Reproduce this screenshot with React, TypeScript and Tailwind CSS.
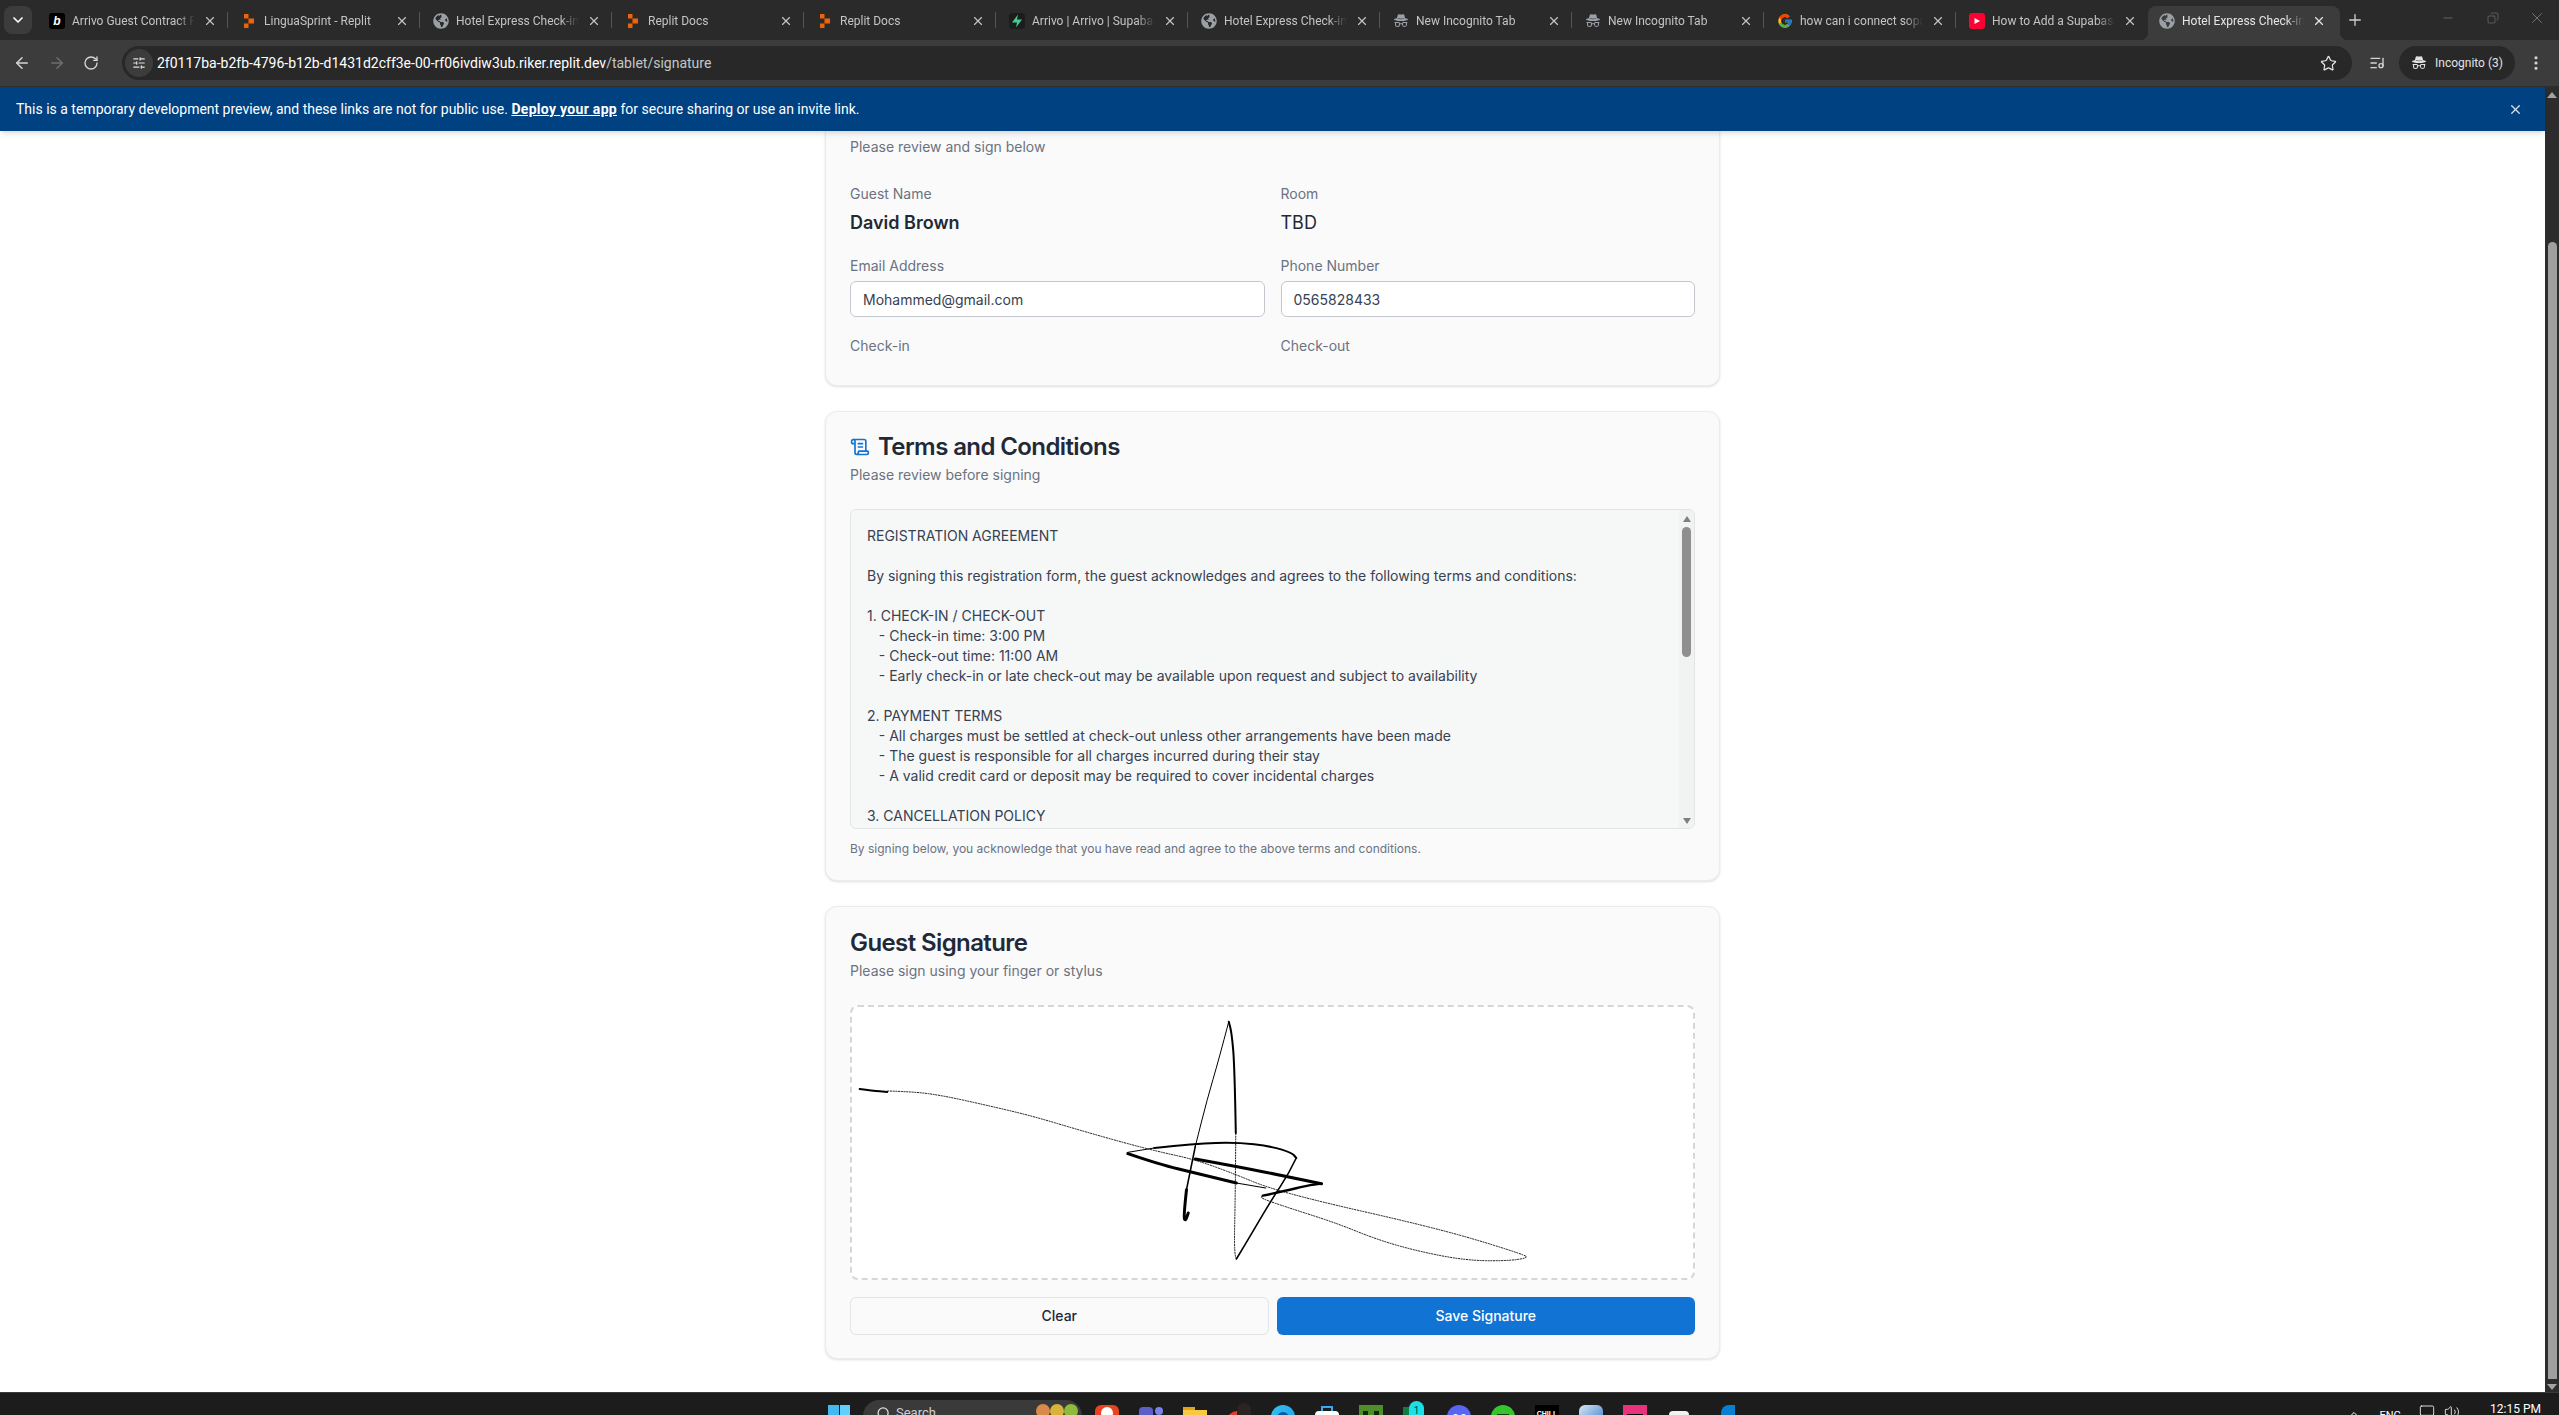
import { ReactNode } from "react";
import {
  ArrowLeft,
  ArrowRight,
  ChevronDown,
  ChevronUp,
  Copy,
  ListMusic,
  Minus,
  Monitor,
  MoreVertical,
  Plus,
  RotateCw,
  ScrollText,
  Search,
  SlidersHorizontal,
  Star,
  Volume2,
  X,
} from "lucide-react";
import { BsIncognito } from "react-icons/bs";
import { FaGlobeAmericas } from "react-icons/fa";
import { FcGoogle } from "react-icons/fc";

const ReplitIcon = () => (
  <svg viewBox="0 0 16 16" className="w-4 h-4">
    <path d="M3 1h4.500v4.500H3zM7.500 5.500H13v5H7.500zM3 10.500h4.500V15H3z" fill="#f26207" />
  </svg>
);

const BoltIcon = () => (
  <div className="w-4 h-4 rounded-sm bg-[#1c1c1c] flex items-center justify-center">
    <svg viewBox="0 0 16 16" className="w-4 h-4">
      <path d="M9 1.500 3 9.500h5l-1 5 6-8H8z" fill="#3ecf8e" />
    </svg>
  </div>
);

const BrandB = () => (
  <div className="w-4 h-4 rounded-[3px] bg-black text-white flex items-center justify-center text-[12px] font-bold italic font-['Liberation_Sans',sans-serif]">
    b
  </div>
);

const YoutubeIcon = () => (
  <div className="w-4 h-4 rounded-[3px] bg-[#ff0033] flex items-center justify-center">
    <svg viewBox="0 0 8 8" className="w-2 h-2">
      <path d="M1.500 1v6L7 4z" fill="#fff" />
    </svg>
  </div>
);

const Globe = () => <FaGlobeAmericas className="w-4 h-4 text-[#9aa0a6]" />;
const Spy = () => <BsIncognito className="w-4 h-4 text-[#9aa0a6]" />;

const tabs: { title: string; icon: ReactNode }[] = [
  { title: "Arrivo Guest Contract Form", icon: <BrandB /> },
  { title: "LinguaSprint - Replit", icon: <ReplitIcon /> },
  { title: "Hotel Express Check-in", icon: <Globe /> },
  { title: "Replit Docs", icon: <ReplitIcon /> },
  { title: "Replit Docs", icon: <ReplitIcon /> },
  { title: "Arrivo | Arrivo | Supabase", icon: <BoltIcon /> },
  { title: "Hotel Express Check-in", icon: <Globe /> },
  { title: "New Incognito Tab", icon: <Spy /> },
  { title: "New Incognito Tab", icon: <Spy /> },
  { title: "how can i connect sopabase", icon: <FcGoogle className="w-4 h-4" /> },
  { title: "How to Add a Supabase", icon: <YoutubeIcon /> },
  { title: "Hotel Express Check-in", icon: <Globe /> },
];

function TabStrip() {
  return (
    <div className="h-10 bg-[#2a2a2a] flex items-end shrink-0 font-['Roboto',sans-serif]">
      <div className="w-9 h-10 flex items-center justify-center shrink-0">
        <div className="w-[28px] h-[28px] rounded-lg bg-[#3c3c3c] flex items-center justify-center">
          <ChevronDown className="w-4 h-4 text-white" strokeWidth={2.5} />
        </div>
      </div>
      {tabs.map((tab, i) => {
        const active = i === tabs.length - 1;
        return (
          <div
            key={i}
            className={
              active
                ? "relative w-[192px] h-[34px] pb-1 pl-[11px] pr-[14px] flex items-center bg-[#3c3c3c] rounded-t-lg text-[#e6e6e6]"
                : "relative w-[192px] h-[34px] pb-1 pl-[13px] pr-[11px] flex items-center text-[#c4c4c4]"
            }
          >
            <div className="w-4 h-4 shrink-0">{tab.icon}</div>
            <span className="ml-[7px] flex-1 min-w-0 text-[12px] whitespace-nowrap overflow-hidden [mask-image:linear-gradient(to_right,black_85%,transparent)]">
              {tab.title}
            </span>
            <X className="w-[14px] h-[14px] ml-2 shrink-0" strokeWidth={2} />
            {!active && i < 10 && <div className="absolute right-0 top-[6px] h-4 w-px bg-[#555555]" />}
            {active && (
              <>
                <div className="absolute bottom-0 -left-2 w-2 h-2 bg-[radial-gradient(circle_at_0_0,transparent_8px,#3c3c3c_8.5px)]" />
                <div className="absolute bottom-0 -right-2 w-2 h-2 bg-[radial-gradient(circle_at_100%_0,transparent_8px,#3c3c3c_8.5px)]" />
              </>
            )}
          </div>
        );
      })}
      <div className="h-10 flex items-center ml-[6px]">
        <Plus className="w-[18px] h-[18px] text-[#d0d0d0]" strokeWidth={1.75} />
      </div>
      <div className="h-10 ml-auto flex items-center pb-1 text-[#8b8b8b]">
        <div className="w-[45px] flex justify-center">
          <Minus className="w-[14px] h-[14px]" strokeWidth={1} />
        </div>
        <div className="w-[45px] flex justify-center">
          <Copy className="w-3 h-3 -scale-x-100" strokeWidth={1} />
        </div>
        <div className="w-[44px] flex justify-center">
          <X className="w-[18px] h-[18px]" strokeWidth={1} />
        </div>
      </div>
    </div>
  );
}

function Toolbar() {
  return (
    <div className="h-[47px] bg-[#3c3c3c] border-b border-[#2e2e2e] flex items-center shrink-0 font-['Roboto',sans-serif]">
      <div className="w-[122px] shrink-0 flex items-center pl-[13px] gap-[17px]">
        <ArrowLeft className="w-[18px] h-[18px] text-[#d5d5d5]" strokeWidth={2} />
        <ArrowRight className="w-[18px] h-[18px] text-[#6e6e6e]" strokeWidth={2} />
        <RotateCw className="w-[16px] h-[16px] text-[#d5d5d5]" strokeWidth={2} />
      </div>
      <div className="w-[2230px] h-[34px] rounded-full bg-[#282828] flex items-center pl-[3px] pr-[15px]">
        <div className="w-[28px] h-[28px] rounded-full bg-[#3c3c3c] flex items-center justify-center">
          <SlidersHorizontal className="w-[14px] h-[14px] text-[#e0e0e0]" strokeWidth={2} />
        </div>
        <div className="ml-[4px] text-[14px] whitespace-nowrap text-white">
          2f0117ba-b2fb-4796-b12b-d1431d2cff3e-00-rf06ivdiw3ub.riker.replit.dev
          <span className="text-[#c4c7c5]">/tablet/signature</span>
        </div>
        <Star className="ml-auto w-[17px] h-[17px] text-[#e3e3e3]" strokeWidth={1.75} />
      </div>
      <ListMusic className="ml-[17px] w-4 h-4 text-[#d5d5d5]" strokeWidth={2} />
      <div className="ml-[14px] w-[116px] h-[34px] rounded-full bg-[#282828] flex items-center pl-3 text-[12px] text-[#e3e3e3] whitespace-nowrap">
        <BsIncognito className="w-4 h-4 mr-[8px] text-[#e3e3e3]" />
        Incognito (3)
      </div>
      <MoreVertical className="ml-[12px] w-[18px] h-[18px] text-[#d5d5d5]" strokeWidth={2.25} />
    </div>
  );
}

function Banner() {
  return (
    <div className="h-11 bg-[#004182] text-white flex items-center pl-4 pr-[22px] shrink-0 shadow-md relative font-['Roboto',sans-serif] text-[14px]">
      <span>
        This is a temporary development preview, and these links are not for public use.{" "}
        <span className="font-bold underline tracking-[0.3px]">Deploy your app</span> for secure sharing or use an invite link.
      </span>
      <X className="ml-auto w-[15px] h-[15px] text-[#d6e2f0]" strokeWidth={2} />
    </div>
  );
}

function Field({ label, children }: { label: string; children?: ReactNode }) {
  return (
    <div className="flex flex-col gap-[5px]">
      <div className="text-sm leading-5 text-[#6b7280]">{label}</div>
      {children}
    </div>
  );
}

function FieldInput({ value }: { value: string }) {
  return (
    <div className="h-9 rounded-md border border-[#c4c7ce] bg-white flex items-center px-3 pt-px text-sm text-[#374151]">
      {value}
    </div>
  );
}

const terms = [
  "REGISTRATION AGREEMENT",
  "",
  "By signing this registration form, the guest acknowledges and agrees to the following terms and conditions:",
  "",
  "1. CHECK-IN / CHECK-OUT",
  "   - Check-in time: 3:00 PM",
  "   - Check-out time: 11:00 AM",
  "   - Early check-in or late check-out may be available upon request and subject to availability",
  "",
  "2. PAYMENT TERMS",
  "   - All charges must be settled at check-out unless other arrangements have been made",
  "   - The guest is responsible for all charges incurred during their stay",
  "   - A valid credit card or deposit may be required to cover incidental charges",
  "",
  "3. CANCELLATION POLICY",
  "   - Cancellations must be made at least 24 hours before arrival",
];

function TermsBox() {
  return (
    <div className="mt-6 h-[320px] rounded-md border border-[#e2e4e7] bg-[#f6f7f7] flex overflow-hidden">
      <div className="flex-1 min-w-0 pt-4 pl-4 text-sm leading-5 text-[#374151] whitespace-pre overflow-hidden">
        {terms.map((line, i) => (
          <div key={i} className="h-5">
            {line}
          </div>
        ))}
      </div>
      <div className="w-[15px] bg-[#f1f2f2] flex flex-col items-center shrink-0 pt-[6px] pb-[4px]">
        <div className="w-0 h-0 border-x-[4px] border-x-transparent border-b-[6px] border-b-[#7f7f7f]" />
        <div className="mt-[5px] w-[9px] h-[130px] rounded-full bg-[#8f8f8f]" />
        <div className="mt-auto w-0 h-0 border-x-[4px] border-x-transparent border-t-[6px] border-t-[#7f7f7f]" />
      </div>
    </div>
  );
}

// traced from the reference crop, x and y are scaled below to fit the pad
const strokes: { w: number; dash?: string; pts: number[][] }[] = [
  { w: 2, pts: [[68, 568], [90, 573], [115, 577]] },
  {
    w: 0.9,
    dash: "2 0.7",
    pts: [
      [115, 574], [160, 576], [210, 588], [280, 615], [360, 648], [440, 690], [520, 730], [580, 757], [640, 780],
      [710, 825], [760, 862], [850, 905], [1000, 965], [1100, 1010], [1200, 1065], [1207, 1075], [1170, 1084],
      [1100, 1082], [1020, 1055], [950, 1020], [880, 970], [800, 925], [750, 895], [755, 888],
    ],
  },
  { w: 2.4, pts: [[755, 888], [790, 875], [830, 858], [855, 852]] },
  { w: 3, pts: [[855, 852], [800, 832], [710, 800], [640, 778]] },
  { w: 1, pts: [[525, 758], [570, 745]] },
  { w: 2, pts: [[570, 745], [640, 732], [710, 728], [770, 740], [805, 760], [812, 775]] },
  { w: 1.6, pts: [[812, 775], [800, 820], [770, 900], [740, 990], [710, 1078]] },
  { w: 0.9, dash: "2 0.7", pts: [[710, 1078], [706, 1070], [708, 900], [709, 700]] },
  { w: 2, pts: [[709, 700], [707, 500], [702, 400], [697, 366]] },
  { w: 1, pts: [[697, 366], [680, 480], [660, 600], [640, 740]] },
  { w: 1.6, pts: [[640, 740], [625, 870]] },
  { w: 3, pts: [[625, 870], [620, 950], [623, 965], [628, 940]] },
  { w: 3, pts: [[525, 762], [580, 795], [640, 820], [710, 850]] },
  { w: 1.2, pts: [[710, 850], [760, 865]] },
];

// quadratic curves through the midpoints, so the stroke stays round
function smooth(pts: number[][]) {
  const p = pts.map(([x, y]) => [(x - 55) / 1.704, (y - 322) / 3]);
  let d = `M${p[0][0]} ${p[0][1]}`;
  for (let i = 1; i < p.length - 1; i++) {
    d += ` Q${p[i][0]} ${p[i][1]} ${(p[i][0] + p[i + 1][0]) / 2} ${(p[i][1] + p[i + 1][1]) / 2}`;
  }
  const last = p[p.length - 1];
  return d + ` L${last[0]} ${last[1]}`;
}

function SignaturePad() {
  return (
    <div className="mt-6 h-[275px] rounded-lg border-2 border-dashed border-[#d4d6da] bg-white overflow-hidden">
      <svg viewBox="0 0 841 271" className="w-full h-full" fill="none" stroke="#000" strokeLinecap="round" strokeLinejoin="round">
        {strokes.map((s, i) => (
          <path key={i} strokeWidth={s.w} strokeDasharray={s.dash} strokeLinecap={s.dash ? "butt" : "round"} d={smooth(s.pts)} />
        ))}
      </svg>
    </div>
  );
}

function Card({ children, className }: { children: ReactNode; className?: string }) {
  return <section className={`rounded-xl border border-[#ececee] bg-[#fafafa] px-6 shadow-sm ${className}`}>{children}</section>;
}

function PageContent() {
  return (
    <main className="flex-1 min-h-0 overflow-hidden bg-white font-['Inter',sans-serif]">
      <div className="w-[895px] mx-auto flex flex-col gap-[25px]">
        <Card className="rounded-t-none border-t-0 pt-[6px] pb-[29px]">
          <p className="text-sm leading-5 text-[#6b7280]">Please review and sign below</p>
          <div className="mt-[27px] grid grid-cols-2 gap-x-4 gap-y-[19px]">
            <Field label="Guest Name">
              <div className="text-lg leading-7 font-semibold text-[#1f2937]">David Brown</div>
            </Field>
            <Field label="Room">
              <div className="text-lg leading-7 text-[#1f2937]">TBD</div>
            </Field>
            <Field label="Email Address">
              <FieldInput value="Mohammed@gmail.com" />
            </Field>
            <Field label="Phone Number">
              <FieldInput value="0565828433" />
            </Field>
            <Field label="Check-in" />
            <Field label="Check-out" />
          </div>
        </Card>

        <Card className="pt-[19px] pb-[23px]">
          <h2 className="flex items-center gap-2 text-2xl leading-8 font-semibold tracking-tight text-[#1f2937]">
            <ScrollText className="w-5 h-5 text-[#1173d4]" strokeWidth={2} />
            Terms and Conditions
          </h2>
          <p className="mt-[2px] text-sm leading-5 text-[#6b7280]">Please review before signing</p>
          <TermsBox />
          <p className="mt-3 text-xs leading-4 text-[#6b7280]">
            By signing below, you acknowledge that you have read and agree to the above terms and conditions.
          </p>
        </Card>

        <Card className="pt-5 pb-[23px]">
          <h2 className="text-2xl leading-8 font-semibold tracking-tight text-[#1f2937]">Guest Signature</h2>
          <p className="mt-[2px] text-sm leading-5 text-[#6b7280]">Please sign using your finger or stylus</p>
          <SignaturePad />
          <div className="mt-[17px] grid grid-cols-2 gap-2">
            <button className="h-[38px] rounded-md border border-[#e2e4e7] bg-[#fafafa] text-sm font-medium text-[#1f2937]">Clear</button>
            <button className="h-[38px] rounded-md bg-[#1173d4] text-sm font-medium text-white">Save Signature</button>
          </div>
        </Card>
      </div>
    </main>
  );
}

function PageScrollbar() {
  return (
    <div className="w-[14px] bg-[#2c2c2c] flex flex-col items-center shrink-0 pt-[5px] pb-[2px]">
      <div className="w-0 h-0 border-x-[5px] border-x-transparent border-b-[6px] border-b-[#a3a3a3]" />
      <div className="mt-[144px] w-[9px] flex-1 rounded-t-full bg-[#9f9f9f] mb-[5px]" />
      <div className="w-0 h-0 border-x-[5px] border-x-transparent border-t-[6px] border-t-[#a3a3a3]" />
    </div>
  );
}

const trayIcons: ReactNode[] = [
  <div className="w-6 h-6 rounded-md bg-[#e8431f] flex justify-center pt-[2px]"><div className="w-3 h-3 rounded-full bg-white" /></div>,
  <div className="w-6 h-6 flex justify-center gap-[2px] pt-[2px]"><div className="w-[14px] h-6 rounded-sm bg-[#5b5fc7]" /><div className="w-2 h-2 rounded-full bg-[#7b83eb]" /></div>,
  <div className="w-6 h-6 pt-[2px]"><div className="w-3 h-[3px] bg-[#e0a31e]" /><div className="w-6 h-5 bg-[#f8c93f]" /></div>,
  <div className="relative w-6 h-6"><div className="absolute top-[6px] left-0 w-5 h-5 rounded-full bg-[#e33b2e]" /><div className="absolute -top-[2px] left-[10px] w-[14px] h-7 rounded-full bg-[#2b2420]" /></div>,
  <div className="w-6 h-6 rounded-full bg-gradient-to-br from-[#35c1f1] to-[#1b9de2] flex justify-center pt-[7px]"><div className="w-3 h-3 rounded-full bg-[#0c59a4]" /></div>,
  <div className="w-6 h-6 pt-[1px]"><div className="mx-auto w-3 h-[5px] border-2 border-b-0 border-[#35a9f2]" /><div className="w-6 h-5 bg-white rounded-sm" /></div>,
  <div className="w-6 h-6 bg-[#4f8f2a] flex justify-center gap-[6px] pt-[6px]"><div className="w-[5px] h-[5px] bg-[#10290a]" /><div className="w-[5px] h-[5px] bg-[#10290a]" /></div>,
  <div className="relative w-6 h-6"><div className="absolute top-[2px] left-0 w-4 h-6 bg-[#107c41]" /><div className="absolute -top-[4px] left-[6px] w-[15px] h-5 rounded-full bg-[#19e0e6] text-[10px] leading-5 text-center text-[#0b3b3d]">1</div></div>,
  <div className="w-6 h-6 rounded-full bg-[#5865f2] flex justify-center gap-[3px] pt-[9px]"><div className="w-[5px] h-[5px] rounded-full bg-white" /><div className="w-[5px] h-[5px] rounded-full bg-white" /></div>,
  <div className="w-6 h-6 rounded-full bg-[#35c42b] flex justify-center pt-[9px]"><div className="w-3 h-1 rounded-b-full bg-[#0e3a0c]" /></div>,
  <div className="w-6 h-6 bg-black text-white text-[7px] font-bold text-center pt-[4px] font-['Liberation_Sans',sans-serif]">CHILL</div>,
  <div className="w-6 h-6 rounded-md bg-gradient-to-br from-[#d7e6f5] to-[#2b78c2]" />,
  <div className="w-6 h-6 bg-[#e8327c] flex items-start justify-center pt-[9px]"><div className="w-4 h-[3px] bg-black" /></div>,
  <div className="w-6 h-6 flex justify-center pt-[6px]"><div className="w-5 h-5 bg-[#f2f2f2] rounded-sm" /></div>,
  <div className="w-6 h-6 flex justify-end"><div className="w-[14px] h-6 bg-[#0a7fd1] rounded-tl-lg" /></div>,
];

function Taskbar() {
  return (
    <div className="h-[23px] bg-[#1c1c1c] border-t border-[#3a3a3a] shrink-0 overflow-hidden flex items-start pl-[828px] pr-[18px] font-['Roboto',sans-serif] text-white">
      <div className="mt-[12px] w-[22px] h-6 grid grid-cols-2 gap-[1px] shrink-0">
        <div className="bg-[#43b8f0]" />
        <div className="bg-[#5fd0fb]" />
      </div>
      <div className="ml-[13px] mt-[7px] w-[219px] h-8 rounded-full bg-[#3a3a3a] flex items-start pl-[12px] pt-[5px] text-[13px] shrink-0">
        <Search className="w-[15px] h-[15px] mt-[1px] text-[#e0e0e0] -scale-x-100" />
        <span className="ml-[6px] text-[#d0d0d0] leading-4">Search</span>
        <div className="ml-auto mr-[4px] -mt-[1px] flex">
          <div className="w-[14px] h-[14px] rounded-full bg-[#d88a4a]" />
          <div className="w-[14px] h-[14px] rounded-full bg-[#d9b23a]" />
          <div className="w-[14px] h-[14px] rounded-full bg-[#8fb93a]" />
        </div>
      </div>
      <div className="ml-[13px] mt-[12px] flex gap-5 shrink-0">
        {trayIcons.map((icon, i) => (
          <div key={i} className="w-6 h-6 shrink-0">
            {icon}
          </div>
        ))}
      </div>
      <div className="ml-auto flex items-start text-[12px]">
        <ChevronUp className="mt-[15px] w-3 h-3" strokeWidth={2} />
        <span className="ml-[20px] mt-[17px] text-[11px] leading-3">ENG</span>
        <Monitor className="ml-[18px] mt-[11px] w-4 h-4" strokeWidth={1.25} />
        <Volume2 className="ml-[9px] mt-[11px] w-4 h-4" strokeWidth={1.25} />
        <span className="ml-[30px] mt-[8px] leading-4 text-[12px]">12:15 PM</span>
      </div>
    </div>
  );
}

export default function App() {
  return (
    <div className="h-screen w-full flex flex-col overflow-hidden bg-white">
      <TabStrip />
      <Toolbar />
      <div className="flex-1 min-h-0 flex">
        <div className="flex-1 min-w-0 flex flex-col">
          <Banner />
          <PageContent />
        </div>
        <PageScrollbar />
      </div>
      <Taskbar />
    </div>
  );
}
